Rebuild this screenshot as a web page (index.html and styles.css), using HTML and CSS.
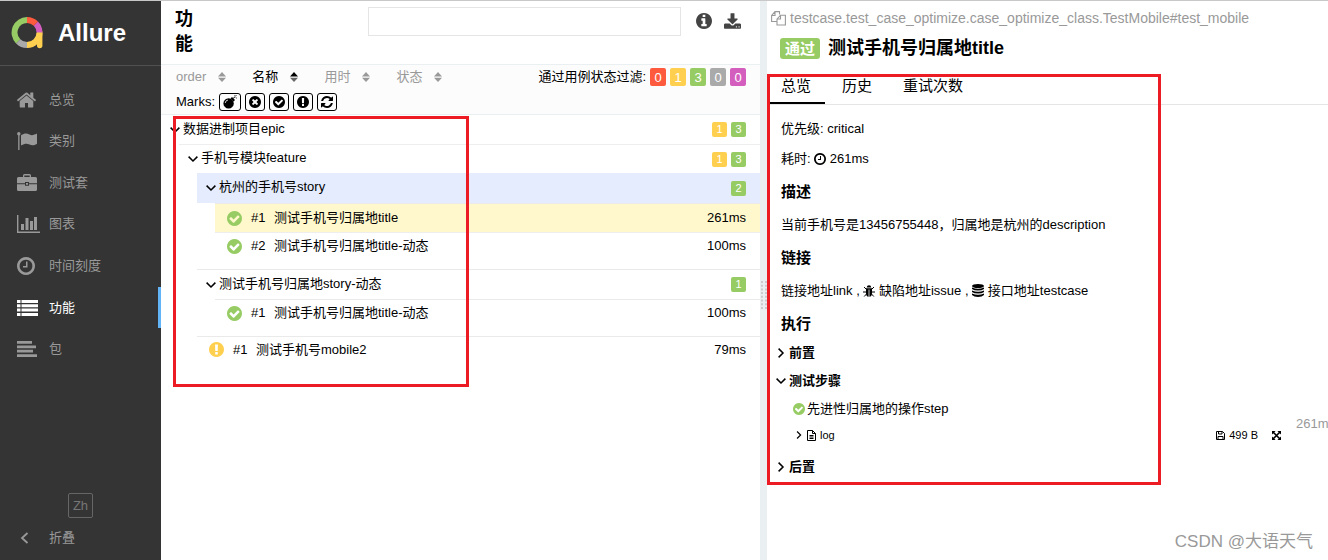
FILE: index.html
```html
<!DOCTYPE html>
<html lang="zh">
<head>
<meta charset="utf-8">
<title>Allure Report</title>
<link rel="stylesheet" href="styles.css">
</head>
<body>
<svg class="defs" aria-hidden="true">
  <symbol id="check" viewBox="128 128 1536 1536"><path d="M1412 734q0-28-18-46l-91-90q-19-19-45-19t-45 19l-408 407-226-226q-19-19-45-19t-45 19l-91 90q-18 18-18 46 0 27 18 45l362 362q19 19 45 19 27 0 46-19l543-543q18-18 18-45zm252 162q0 209-103 385.5t-279.5 279.5-385.5 103-385.5-103-279.5-279.5-103-385.5 103-385.5 279.5-279.5 385.5-103 385.5 103 279.5 279.5 103 385.5z"/></symbol>
  <symbol id="bang" viewBox="128 128 1536 1536"><path d="M896 128q209 0 385.5 103t279.5 279.5 103 385.5-103 385.5-279.5 279.5-385.5 103-385.5-103-279.5-279.5-103-385.5 103-385.5 279.5-279.5 385.5-103zm128 1247v-190q0-14-9-23.5t-22-9.5h-192q-13 0-23 10t-10 23v190q0 13 10 23t23 10h192q13 0 22-9.5t9-23.5zm-2-344l18-621q0-12-10-18-10-8-24-8h-220q-14 0-24 8-10 6-10 18l17 621q0 10 10 17.5t24 7.5h185q14 0 23.5-7.5t10.5-17.5z"/></symbol>
  <symbol id="cross" viewBox="128 128 1536 1536"><path d="M1277 1122q0-26-19-45l-181-181 181-181q19-19 19-45 0-27-19-46l-90-90q-19-19-46-19-26 0-45 19l-181 181-181-181q-19-19-45-19-27 0-46 19l-90 90q-19 19-19 46 0 26 19 45l181 181-181 181q-19 19-19 45 0 27 19 46l90 90q19 19 46 19 26 0 45-19l181-181 181 181q19 19 45 19 27 0 46-19l90-90q19-19 19-46zm387-226q0 209-103 385.5t-279.5 279.5-385.5 103-385.5-103-279.5-279.5-103-385.5 103-385.5 279.5-279.5 385.5-103 385.5 103 279.5 279.5 103 385.5z"/></symbol>
  <symbol id="clock" viewBox="128 128 1536 1536"><path d="M1024 544v448q0 14-9 23t-23 9h-320q-14 0-23-9t-9-23v-64q0-14 9-23t23-9h224v-352q0-14 9-23t23-9h64q14 0 23 9t9 23zm416 352q0-148-73-273t-198-198-273-73-273 73-198 198-73 273 73 273 198 198 273 73 273-73 198-198 73-273zm224 0q0 209-103 385.5t-279.5 279.5-385.5 103-385.5-103-279.5-279.5-103-385.5 103-385.5 279.5-279.5 385.5-103 385.5 103 279.5 279.5 103 385.5z"/></symbol>
  <symbol id="down" viewBox="0 0 10 10"><path d="M0.6 2.6L5 7L9.4 2.6" fill="none" stroke="currentColor" stroke-width="1.5"/></symbol>
  <symbol id="right" viewBox="0 0 10 10"><path d="M2.6 0.6L7 5L2.6 9.4" fill="none" stroke="currentColor" stroke-width="1.5"/></symbol>
  <symbol id="sort" viewBox="0 0 8 10"><path d="M0 4.4L4 0L8 4.4z"/><path d="M0 5.8L4 10L8 5.8z"/></symbol>
</svg>

<div class="app">
  <aside class="side">
    <a class="brand" href="#">
      <svg class="outline" width="32" height="34" viewBox="0 0 32 34" stroke-width="6">
        <path d="M16 4A12.5 12.5 0 0 0 7.2 25.3" stroke="#97cc64"/>
        <path d="M7.2 25.3A12.5 12.5 0 0 0 16 29" stroke="#aaa"/>
        <path d="M16 29A12.5 12.5 0 0 0 28.5 16.5" stroke="#ffd050"/>
        <path d="M28.700 16.500V29.500" stroke="#ffd050" stroke-width="5.4" stroke-linecap="round"/>
        <path d="M24.8 7.7A12.5 12.5 0 0 1 28.5 16.5" stroke="#d35ebe"/>
        <path d="M16 4A12.5 12.5 0 0 1 24.8 7.7" stroke="#fd5a3e"/>
      </svg>
      <span>Allure</span>
    </a>
    <nav class="nav">
      <a href="#"><svg width="19" height="16" viewBox="90 253 1612 1283"><path d="M1472 992v480q0 26-19 45t-45 19h-384v-384h-256v384h-384q-26 0-45-19t-19-45v-480q0-1 .5-3t.5-3l575-474 575 474q1 2 1 6zm223-69l-62 74q-8 9-21 11h-3q-13 0-21-7l-692-577-692 577q-12 8-24 7-13-2-21-11l-62-74q-8-10-7-23.5t11-21.5l719-599q32-26 76-26t76 26l244 204v-195q0-14 9-23t23-9h192q14 0 23 9t9 23v408l219 182q10 8 11 21.5t-7 23.5z"/></svg><span>总览</span></a>
      <a href="#"><svg width="20" height="18" viewBox="0 0 20 18"><circle cx="1.8" cy="1.8" r="1.7"/><path d="M1.2 2h1.3v16H1.2zM4 3.2C8 .8 10 1.4 12.500 2.600C15 3.700 17 3 20 1.600V11.800C17 13.500 15 13.800 12.500 12.600C10 11.300 8 11.300 4 13.500z"/></svg><span>类别</span></a>
      <a href="#"><svg width="20" height="17" viewBox="0 0 20 17"><path fill-rule="evenodd" d="M6 3V1.500Q6 0 7.500 0H12.500Q14 0 14 1.500V3H18.500Q20 3 20 4.500V9.300H12V8H8V9.300H0V4.500Q0 3 1.500 3zM7.300 3H12.700V1.400H7.300zM0 10.300H8V11.800H12V10.300H20V15.500Q20 17 18.500 17H1.500Q0 17 0 15.500zM9 9H11V10.800H9z"/></svg><span>测试套</span></a>
      <a href="#"><svg width="23" height="18" viewBox="0 0 23 18"><path d="M0 0H1.400V16.600H23V18H0zM4 9H7V15H4zM8.500 3H11.500V15H8.500zM13 6H16V15H13zM17 2H20V15H17z"/></svg><span>图表</span></a>
      <a href="#"><svg width="18" height="18"><use href="#clock"/></svg><span>时间刻度</span></a>
      <a href="#" class="on"><svg width="21" height="16" viewBox="0 0 21 16"><path d="M0 0h3.500v3H0zM4.500 0H21v3H4.500zM0 4.300h3.500v3H0zM4.500 4.300H21v3H4.500zM0 8.600h3.500v3H0zM4.500 8.600H21v3H4.500zM0 13h3.500v3H0zM4.500 13H21v3H4.500z"/></svg><span>功能</span></a>
      <a href="#"><svg width="20" height="16" viewBox="0 0 20 16"><path d="M0 0H15V2.800H0zM0 4.400H19V7.200H0zM0 8.800H16V11.600H0zM0 13.200H20V16H0z"/></svg><span>包</span></a>
    </nav>
    <div class="foot">
      <button class="lang" type="button">Zh</button>
      <button class="fold" type="button"><svg width="10" height="12" viewBox="0 0 10 12"><path d="M7.500 1L2 6L7.500 11" fill="none" stroke="currentColor" stroke-width="1.800"/></svg><span>折叠</span></button>
    </div>
  </aside>

  <main class="tree">
    <header class="tree-head">
      <h1>功能</h1>
      <input class="search" type="text" aria-label="搜索">
      <button class="tool" type="button" aria-label="信息"><svg width="16" height="16" viewBox="128 128 1536 1536"><path d="M1152 1376v-160q0-14-9-23t-23-9h-96v-512q0-14-9-23t-23-9h-320q-14 0-23 9t-9 23v160q0 14 9 23t23 9h96v320h-96q-14 0-23 9t-9 23v160q0 14 9 23t23 9h448q14 0 23-9t9-23zm-128-896v-160q0-14-9-23t-23-9h-192q-14 0-23 9t-9 23v160q0 14 9 23t23 9h192q14 0 23-9t9-23zm640 416q0 209-103 385.5t-279.5 279.5-385.5 103-385.5-103-279.5-279.5-103-385.5 103-385.5 279.5-279.5 385.5-103 385.5 103 279.5 279.5 103 385.5z"/></svg></button>
      <button class="tool" type="button" aria-label="下载"><svg width="17" height="16" viewBox="64 0 1664 1536"><path d="M1344 1344q0-26-19-45t-45-19-45 19-19 45 19 45 45 19 45-19 19-45zm256 0q0-26-19-45t-45-19-45 19-19 45 19 45 45 19 45-19 19-45zm128-224v320q0 40-28 68t-68 28h-1472q-40 0-68-28t-28-68v-320q0-40 28-68t68-28h465l135 136q58 56 136 56t136-56l136-136h464q40 0 68 28t28 68zm-325-569q17 41-14 70l-448 448q-18 19-45 19t-45-19l-448-448q-31-29-14-70 17-39 59-39h256v-448q0-26 19-45t45-19h256q26 0 45 19t19 45v448h256q42 0 59 39z"/></svg></button>
    </header>
    <section class="controls">
      <div class="control-row">
        <div class="sorters">
          <button type="button">order<svg width="8" height="10"><use href="#sort"/></svg></button>
          <button type="button" class="on">名称<svg width="8" height="10" viewBox="0 0 8 10"><path d="M0 4.400L4 0L8 4.400z"/><path d="M0 5.800L4 10L8 5.800z" fill="#666"/></svg></button>
          <button type="button">用时<svg width="8" height="10"><use href="#sort"/></svg></button>
          <button type="button">状态<svg width="8" height="10"><use href="#sort"/></svg></button>
        </div>
        <div class="filters">
          <span>通过用例状态过滤:</span>
          <button type="button" class="red">0</button>
          <button type="button" class="yellow">1</button>
          <button type="button" class="green">3</button>
          <button type="button" class="gray">0</button>
          <button type="button" class="purple">0</button>
        </div>
      </div>
      <div class="marks">
        <span>Marks:</span>
        <button type="button" aria-label="flaky"><svg width="14" height="14" viewBox="0 0 14 14"><circle cx="5.600" cy="8.400" r="5.200"/><path d="M7.500 3.400L9 2L12 5L10.600 6.500z"/><path d="M10.500 3.500Q11 1.500 12.500 2" fill="none" stroke="currentColor"/><path d="M13 0v1M11.500 .5l.6.6M14 3h-.8" stroke="currentColor" stroke-width=".8"/><path d="M2.200 8Q2.500 5.300 5 5" fill="none" stroke="#fff" stroke-width=".8"/></svg></button>
        <button type="button" aria-label="new failed"><svg width="12" height="12"><use href="#cross"/></svg></button>
        <button type="button" aria-label="new passed"><svg width="12" height="12"><use href="#check"/></svg></button>
        <button type="button" aria-label="new broken"><svg width="12" height="12"><use href="#bang"/></svg></button>
        <button type="button" aria-label="retries"><svg width="12" height="12" viewBox="128 128 1536 1536"><path d="M1639 1056q0 5-1 7-64 268-268 434.500t-478 166.500q-146 0-282.500-55t-243.500-157l-129 129q-19 19-45 19t-45-19-19-45v-448q0-26 19-45t45-19h448q26 0 45 19t19 45-19 45l-137 137q71 66 161 102t187 36q134 0 250-65t186-179q11-17 53-117 8-23 30-23h192q13 0 22.500 9.500t9.500 22.500zm25-800v448q0 26-19 45t-45 19h-448q-26 0-45-19t-19-45 19-45l138-138q-148-137-349-137-134 0-250 65t-186 179q-11 17-53 117-8 23-30 23h-199q-13 0-22.500-9.500t-9.500-22.500v-7q65-268 270-434.500t480-166.500q146 0 284 55.500t245 156.500l130-129q19-19 45-19t45 19 19 45z"/></svg></button>
      </div>
    </section>
    <div class="nodes">
      <div class="group">
        <div class="row"><svg width="10" height="10"><use href="#down"/></svg><span class="name">数据进制项目epic</span><span class="count yellow">1</span><span class="count green">3</span></div>
        <div class="group">
          <div class="row short"><svg width="10" height="10"><use href="#down"/></svg><span class="name">手机号模块feature</span><span class="count yellow">1</span><span class="count green">3</span></div>
          <div class="group last">
            <div class="row hover"><svg width="10" height="10"><use href="#down"/></svg><span class="name">杭州的手机号story</span><span class="count green">2</span></div>
            <div class="leaves">
              <a class="leaf on" href="#"><svg class="pass" width="15" height="15"><use href="#check"/></svg><span class="num">#1</span><span class="name">测试手机号归属地title</span><span>261ms</span></a>
              <a class="leaf" href="#"><svg class="pass" width="15" height="15"><use href="#check"/></svg><span class="num">#2</span><span class="name">测试手机号归属地title-动态</span><span>100ms</span></a>
            </div>
            <div class="row line"><svg width="10" height="10"><use href="#down"/></svg><span class="name">测试手机号归属地story-动态</span><span class="count green">1</span></div>
            <div class="leaves">
              <a class="leaf" href="#"><svg class="pass" width="15" height="15"><use href="#check"/></svg><span class="num">#1</span><span class="name">测试手机号归属地title-动态</span><span>100ms</span></a>
            </div>
            <a class="leaf line" href="#"><svg class="broken" width="15" height="15"><use href="#bang"/></svg><span class="num">#1</span><span class="name">测试手机号mobile2</span><span>79ms</span></a>
          </div>
        </div>
      </div>
    </div>
    <div class="frame frame-tree"></div>
  </main>

  <div class="gutter"><svg width="6" height="28" viewBox="0 0 6 28"><path d="M1 0V28M5 0V28" stroke="#ccc" stroke-width="2" stroke-dasharray="2 1.700"/></svg></div>

  <section class="detail">
    <div class="path"><svg class="outline" width="15" height="15" viewBox="0 0 15 15" stroke="currentColor" stroke-width="1.100"><path d="M5.500 10.500H.6V4.500L4 .6H8.500V3.500M.6 4.500H4V.6M6 8L9.500 4.200H14.400V14H6zM6 8H9.500V4.200"/></svg><span>testcase.test_case_optimize.case_optimize_class.TestMobile#test_mobile</span></div>
    <h2 class="title"><span class="status">通过</span><span>测试手机号归属地title</span></h2>
    <nav class="tabs"><a href="#" class="on">总览</a><a href="#">历史</a><a href="#">重试次数</a></nav>
    <div class="body">
      <p>优先级: critical</p>
      <p>耗时: <svg width="12" height="12"><use href="#clock"/></svg> 261ms</p>
      <h3>描述</h3>
      <p class="text">当前手机号是13456755448，归属地是杭州的description</p>
      <h3>链接</h3>
      <p class="text"><a href="#">链接地址link</a> , <a href="#"><svg width="12" height="12" viewBox="0 0 12 12"><path d="M3.700 2.600Q4 .3 6 .3T8.300 2.600z"/><path d="M3 3.200H9V8Q9 11.500 6.400 11.800V4.500H5.600V11.800Q3 11.500 3 8z"/><path d="M1 2L3.500 4.500M11 2L8.500 4.500M0 7H3M12 7H9M1.200 11.500L3.500 9M10.800 11.500L8.500 9" stroke="currentColor"/></svg> 缺陷地址issue</a> , <a href="#"><svg width="12" height="13" viewBox="0 0 12 13"><ellipse cx="6" cy="2" rx="6" ry="2"/><path d="M0 3.600Q6 6 12 3.600V5Q10 6.600 6 6.600T0 5zM0 6.600Q6 9 12 6.600V8Q10 9.600 6 9.600T0 8zM0 9.600Q6 12 12 9.600V11Q10 13 6 13T0 11z"/></svg> 接口地址testcase</a></p>
      <h3 class="run">执行</h3>
      <div class="stage"><svg width="10" height="10"><use href="#right"/></svg><b>前置</b></div>
      <div class="stage"><svg width="10" height="10"><use href="#down"/></svg><b>测试步骤</b></div>
      <div class="steps">
        <div class="step"><svg class="pass" width="12" height="12"><use href="#check"/></svg><span>先进性归属地的操作step</span></div>
        <div class="log">
          <svg width="8" height="8"><use href="#right"/></svg>
          <svg width="9" height="11" viewBox="0 0 9 11"><path d="M.5 .5H5.500L8.500 3.500V10.500H.5zM5.500 .5V3.500H8.500M2.500 5.500H6.500M2.500 7H6.500M2.500 8.500H6.500" fill="none" stroke="currentColor"/></svg>
          <span class="name">log</span>
          <a href="#"><svg width="9" height="9" viewBox="0 0 9 9"><path d="M.5 .5H6.500L8.500 2.500V8.500H.5zM2.500 .5V3H6V.5M2 8.500V5.500H7V8.500" fill="none" stroke="currentColor"/></svg>499 B</a>
          <button type="button" aria-label="全屏"><svg width="9" height="9" viewBox="0 0 9 9"><path d="M0 0H3.600L0 3.600zM9 0V3.600L5.400 0zM0 9V5.400L3.600 9zM9 9H5.400L9 5.400z"/><path d="M1 1L8 8M8 1L1 8" stroke="currentColor" stroke-width="1.600"/></svg></button>
        </div>
        <span class="time">261m</span>
      </div>
      <div class="stage after"><svg width="10" height="10"><use href="#right"/></svg><b>后置</b></div>
    </div>
    <div class="frame frame-detail"></div>
    <div class="credit">CSDN @大语天气</div>
  </section>
</div>
</body>
</html>
```
FILE: styles.css
```css
* { box-sizing: border-box; }
body {
  margin: 0;
  background: #fff;
  color: #000;
  font: 13px/20px "Liberation Sans", "Noto Sans CJK SC", sans-serif;
}
a { color: inherit; text-decoration: none; }
button { padding: 0; border: 0; background: none; color: inherit; font: inherit; }
h1, h2, h3, p { margin: 0; }
svg { flex: none; fill: currentColor; }
.outline { fill: none; }
.defs { position: absolute; width: 0; height: 0; }
.name { flex: 1; white-space: nowrap; }
.red { background: #fd5a3e; }
.yellow { background: #ffd050; }
.green { background: #97cc64; }
.gray { background: #aaa; }
.purple { background: #d35ebe; }
.pass { color: #97cc64; }
.broken { color: #ffd050; }

.app {
  display: grid;
  grid-template-columns: 161px minmax(0, 599fr) 7px minmax(0, 561fr);
  min-height: 100vh;
  border-top: 1px solid #c8c8c8;
}

.side { display: flex; flex-direction: column; background: #343434; color: #999; }
.brand {
  display: flex;
  align-items: center;
  gap: 15px;
  height: 65px;
  padding-left: 11px;
  border-bottom: 1px solid #505050;
  color: #fff;
  font-size: 24px;
  font-weight: bold;
}
.nav { display: grid; grid-auto-rows: 1fr; height: 291px; margin-top: 13px; }
.nav a {
  display: grid;
  grid-template-columns: 32px 1fr;
  align-items: center;
  padding-left: 17px;
  border-right: 3px solid transparent;
}
.nav .on { color: #fff; border-color: #63b4f7; }
.foot { display: flex; flex-direction: column; gap: 10px; margin-top: auto; padding-bottom: 12px; }
.lang { align-self: center; width: 25px; height: 25px; border: 1px solid #666; border-radius: 2px; color: #777; }
.fold { display: flex; align-items: center; gap: 19px; padding-left: 20px; }

.tree { position: relative; }
.tree-head { display: flex; align-items: flex-start; height: 64px; padding: 6px 19px 0 14px; border-bottom: 1px solid #eaeff2; color: #444; }
.tree-head h1 { width: 19px; margin-right: auto; color: #000; font-size: 18px; line-height: 25px; }
.search { width: 313px; height: 29px; margin-right: 15px; border: 1px solid #e5e5e5; }
.tool { display: flex; margin-top: 6px; }
.tool + .tool { margin-left: 12px; }
.controls { height: 50px; padding: 2px 14px 0 15px; border-bottom: 1px solid #eaeff2; background: #fcfcfc; }
.control-row, .sorters, .filters, .marks { display: flex; align-items: center; }
.control-row { justify-content: space-between; }
.sorters { gap: 26px; color: #999; }
.sorters button { display: flex; align-items: center; gap: 12px; }
.sorters .on { color: #000; }
.filters { gap: 4px; }
.filters button { width: 16px; height: 18px; border-radius: 2px; color: #fff; }
.marks { gap: 4px; margin-top: 5px; }
.marks button { display: grid; place-items: center; height: 18px; padding: 0 3px; border: 1px solid #000; border-radius: 3px; }

.group .group { margin-left: 18px; border-top: 1px solid #eee; }
.row { display: flex; align-items: center; height: 29px; padding: 0 14px 0 9px; }
.row svg { margin-right: 3px; }
.row .name { padding-bottom: 2px; }
.row.short { height: 28px; }
.group .last { border-top: 0; }
.count { width: 15px; height: 15px; margin-left: 4px; border-radius: 2px; color: #fff; font-size: 11px; line-height: 15px; text-align: center; }
.row.hover { height: 30px; background: #e4ecfd; }
.line { border-top: 1px solid #eaeaea; }
.row.line { height: 30px; }
.leaves { height: 66px; margin-left: 18px; border-top: 1px solid #eaeaea; }
.row.line + .leaves { height: 37px; }
.leaf { display: flex; align-items: center; height: 28px; padding: 0 14px 2px 12px; }
.leaf.on { height: 29px; padding-bottom: 0; border-bottom: 1px solid #eee; background: #fff8cc; }
.num { width: 23px; margin-left: 9px; }

.gutter { display: flex; align-items: center; justify-content: center; padding-top: 28px; background: #eaeff2; }
.detail { position: relative; overflow: hidden; }
.path { display: flex; align-items: center; gap: 4px; padding: 7px 4px 0; color: #999; font-size: 14px; }
.title { display: flex; align-items: center; gap: 8px; margin: 9px 0 0 13px; font-size: 18px; line-height: 22px; }
.status { padding: 0 5px; border-radius: 3px; background: #97cc64; color: #fff; font-size: 15px; line-height: 21px; }
.tabs { display: flex; gap: 3px; margin-top: 16px; border-bottom: 1px solid #e5e5e5; font-size: 15px; }
.tabs a { height: 29px; padding: 1px 14px 0; border-bottom: 2px solid transparent; }
.tabs .on { border-color: #000; }
.body { padding: 14px 0 0 14px; }
.body p { margin-bottom: 10px; white-space: nowrap; }
.body p svg { vertical-align: -2px; }
.body h3 { margin: 12px 0; font-size: 15px; line-height: 22px; }
.body .text { margin: 0; }
.body .run { margin-bottom: 4px; }
.stage { display: flex; align-items: center; gap: 3px; height: 28px; margin-left: -5px; }
.steps { display: grid; grid-template-columns: 1fr 32px; column-gap: 15px; }
.steps > * { grid-column: 1; }
.step { display: flex; align-items: center; gap: 2px; height: 27px; padding-left: 12px; }
.log { display: flex; align-items: center; gap: 4px; height: 26px; padding-left: 14px; font-size: 11px; }
.log a, .log button { display: flex; align-items: center; gap: 4px; }
.log button { margin-left: 10px; }
.steps .time { grid-area: 1 / 2 / 3 / 3; align-self: center; padding-top: 4px; color: #999; }
.after { margin-top: 5px; }

.frame { position: absolute; border: 3px solid #ed1c24; pointer-events: none; }
.frame-tree { top: 115px; left: 12px; width: 296px; height: 271px; }
.frame-detail { top: 73px; left: 0; width: 394px; height: 411px; }
.credit { position: absolute; right: 15px; bottom: 6px; color: #999; font-size: 17px; line-height: 24px; }
```
